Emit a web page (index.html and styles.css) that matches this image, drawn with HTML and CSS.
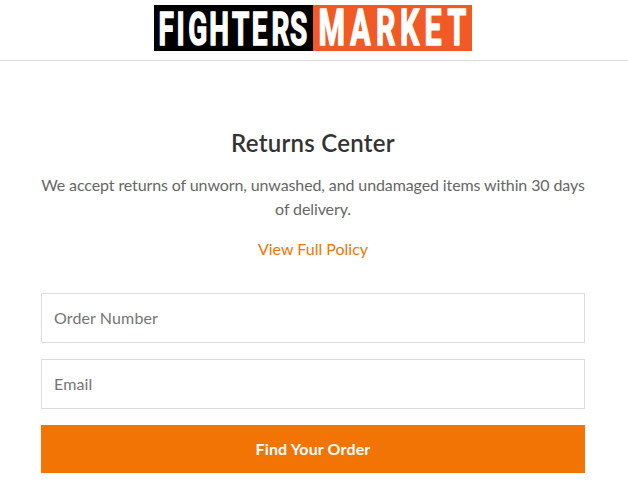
FILE: index.html
```html
<!DOCTYPE html>
<html lang="en">
<head>
<meta charset="utf-8">
<title>Returns Center</title>
<link rel="stylesheet" href="styles.css">
</head>
<body>
<header class="header">
  <svg class="logo" viewBox="0 0 318 46" role="img" aria-label="Fighters Market">
    <rect width="159" height="46" fill="#000"/>
    <rect x="159" width="159" height="46" fill="#f15a24"/>
    <text class="logo-fighters" transform="translate(0 40) scale(.6 1)" x="7.5 37.5 57 92 130 163 196 226.5">FIGHTERS</text>
    <text class="logo-market" transform="translate(0 40) scale(.6 1)"><tspan class="logo-m" x="274">M</tspan><tspan x="327 370 410 451 489">ARKET</tspan></text>
  </svg>
</header>
<main class="returns">
  <h1 class="title">Returns Center</h1>
  <p class="policy">We accept returns of unworn, unwashed, and undamaged items within 30 days of delivery.</p>
  <a class="policy-link" href="#">View Full Policy</a>
  <form class="lookup">
    <input class="field" type="text" placeholder="Order Number" aria-label="Order Number">
    <input class="field" type="email" placeholder="Email" aria-label="Email">
    <button class="submit" type="button">Find Your Order</button>
  </form>
</main>
</body>
</html>
```

FILE: styles.css
```css
* { box-sizing: border-box; }
body {
  margin: 0;
  background: #fff;
  color: #666;
  font: 16px/24px Lato, sans-serif;
}
.header {
  display: flex;
  justify-content: center;
  height: 61px;
  padding: 5px 2px 0 0;
  border-bottom: 1px solid #dcdcdc;
}
.logo { width: 318px; height: 46px; overflow: visible; }
.logo text { fill: #fff; stroke: #fff; stroke-width: 1.6px; font-family: Roboto, sans-serif; font-weight: 700; }
.logo-fighters { font-size: 46.5px; }
.logo-market { font-size: 50.5px; }
.returns {
  width: 544px;
  margin: 0 0 0 41px;
  padding-top: 66px;
  text-align: center;
}
.title { margin: 0 0 14px; color: #333; font-size: 24px; line-height: 32px; font-weight: 600; letter-spacing: .26px; }
.policy { margin: 0 -4px 16px; letter-spacing: -.11px; }
.policy-link { display: block; color: #f27405; text-decoration: none; }
.lookup { display: grid; gap: 16px; margin-top: 32px; }
.field {
  width: 100%;
  height: 50px;
  padding: 0 12px 2px;
  border: 1px solid #dcdcdc;
  border-radius: 0;
  background: #fff;
  color: #333;
  font: inherit;
  letter-spacing: .12px;
}
.field::placeholder { color: #757575; }
.submit {
  height: 48px;
  padding: 0;
  border: 0;
  background: #f27405;
  color: #fff;
  font: inherit;
  font-weight: 700;
  letter-spacing: .13px;
}
```
